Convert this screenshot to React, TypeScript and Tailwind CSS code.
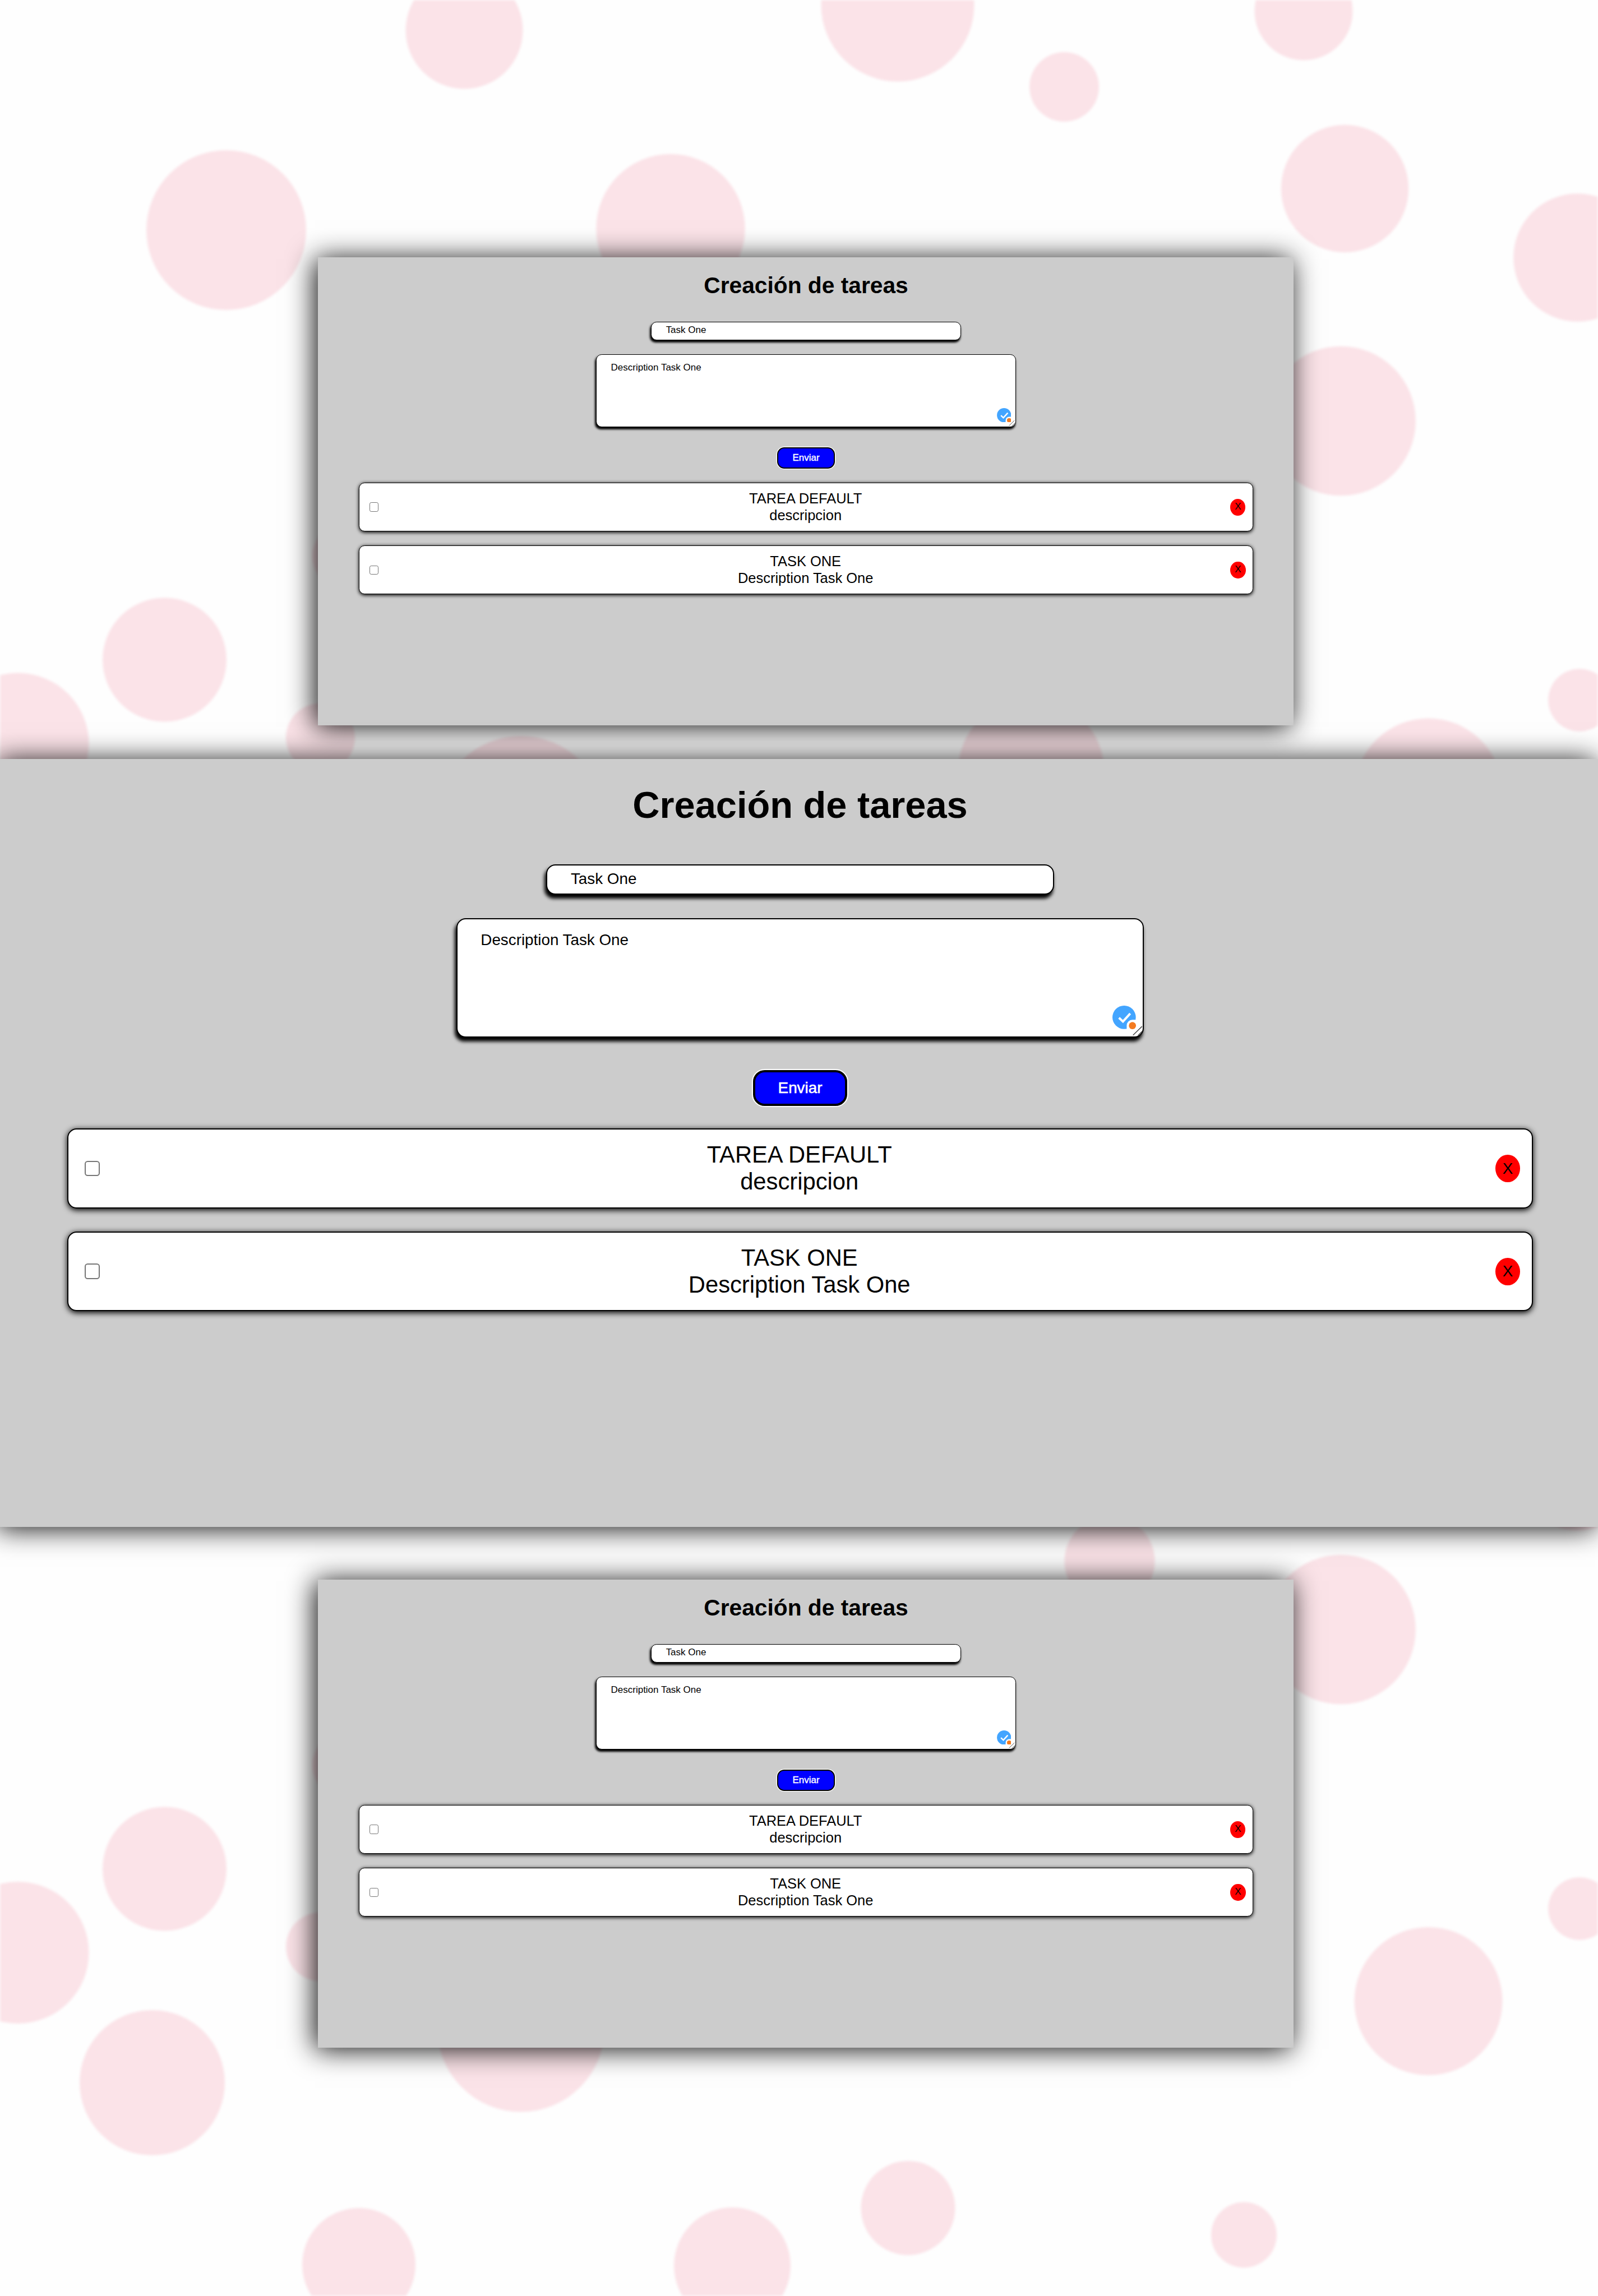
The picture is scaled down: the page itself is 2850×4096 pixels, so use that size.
import React from "react";

const BUBBLES: [number, number, number][] = [
  [828, 54, 104.5],
  [1601, 9, 136.5],
  [1898, 155, 62],
  [2325, 20, 87.5],
  [403.5, 410.5, 142.5],
  [1196, 407.5, 132.7],
  [2398.5, 336.5, 113.7],
  [2813.5, 459.5, 114.3],
  [2391.5, 751, 133.3],
  [293.5, 1177, 110.5],
  [32, 1327, 126.5],
  [571.5, 1316, 61.5],
  [615, 992, 58],
  [929, 1462, 149],
  [1839, 1375, 130],
  [2547.5, 1413.5, 132],
  [2817, 1249, 55.8],
  [1979, 2785, 80.5],
  [2813.5, 2615.7, 114.3],
  [2391.5, 2907, 133.3],
  [293.5, 3334, 110.5],
  [32, 3483.5, 126.5],
  [571.5, 3473, 61.5],
  [615, 3149, 58],
  [929, 3618.5, 149],
  [2547.5, 3570, 132],
  [2817, 3405, 55.8],
  [271.5, 3715.5, 129.5],
  [640, 4040, 101],
  [1306, 4042, 104],
  [1619.5, 3939, 84],
  [2218.5, 3987, 58.5],
];

const TASKS = [
  { title: "TAREA DEFAULT", description: "descripcion" },
  { title: "TASK ONE", description: "Description Task One" },
];

function Background() {
  return (
    <svg className="absolute inset-0 h-[4096px] w-[2850px] blur-[2px]" viewBox="0 0 2850 4096" aria-hidden="true">
      {BUBBLES.map(([cx, cy, r], i) => (
        <circle key={i} cx={cx} cy={cy} r={r} fill="#fbe3e8" />
      ))}
    </svg>
  );
}

function CheckBadge() {
  return (
    <svg className="absolute right-6 bottom-6 h-20 w-20" viewBox="0 0 20 20" fill="none">
      <circle cx="10" cy="10" r="10" fill="#43a5ff" />
      <path d="M5.6 10.4 9 13.6 15.2 6.8" stroke="#fff" strokeWidth="1.9" />
      <path d="M12.2 20.6V17a4.9 4.9 0 0 1 4.9-4.9h3.5v8.5z" fill="#fff" />
      <circle cx="17.1" cy="17.1" r="3.05" fill="#f47b20" />
    </svg>
  );
}

function ResizeGrip() {
  return (
    <svg className="absolute right-0 bottom-0 h-10 w-10" viewBox="0 0 10 10" stroke="#444" strokeWidth="0.7">
      <path d="M1.3 9 9 1.5M5.5 9.3 9.2 5.6" fill="none" />
    </svg>
  );
}

function TaskItem({ title, description }: { title: string; description: string }) {
  return (
    <li className="flex h-68.25 items-center justify-between rounded-[calc(var(--spacing)*8)] border-[length:var(--spacing)] border-black bg-white px-10 shadow-[0_calc(var(--spacing)*1)_calc(var(--spacing)*5)_#000]">
      <input
        type="checkbox"
        className="mr-3 ml-4 h-13 w-13 appearance-none rounded-[calc(var(--spacing)*2.5)] border-[length:var(--spacing)] border-[#767676] bg-white"
      />
      <div className="text-center text-[length:calc(var(--spacing)*20)] leading-[calc(var(--spacing)*23)]">
        <p>{title}</p>
        <p>{description}</p>
      </div>
      <button className="flex h-23.5 w-21.25 items-center justify-center rounded-[50%] bg-[#ff0000] text-[length:calc(var(--spacing)*13.33)] leading-none">
        X
      </button>
    </li>
  );
}

function TaskPanel({ className }: { className: string }) {
  return (
    <section
      className={`relative flex flex-col items-center bg-[#cccccc] pt-21 text-black shadow-[-5px_3px_46px_rgba(0,0,0,0.94)] ${className}`}
    >
      <h1 className="text-[length:calc(var(--spacing)*32)] leading-[calc(var(--spacing)*37)] font-bold">
        Creación de tareas
      </h1>
      <div className="mt-32 flex h-26 w-434 items-center rounded-[calc(var(--spacing)*8)] border-[length:var(--spacing)] border-black bg-white px-20 pb-0.5 text-[length:calc(var(--spacing)*13.33)] leading-none shadow-[calc(var(--spacing)*-1)_calc(var(--spacing)*3)_calc(var(--spacing)*3)_#000]">
        Task One
      </div>
      <div className="relative mt-20 h-102 w-588 rounded-[calc(var(--spacing)*8)] border-[length:var(--spacing)] border-black bg-white px-20 pt-10 text-[length:calc(var(--spacing)*13.33)] leading-[calc(var(--spacing)*15)] shadow-[calc(var(--spacing)*-1)_calc(var(--spacing)*3)_calc(var(--spacing)*3)_#000]">
        Description Task One
        <CheckBadge />
        <ResizeGrip />
      </div>
      <button className="mt-28 flex h-30.5 w-80.5 items-center justify-center rounded-[calc(var(--spacing)*10)] border-[length:calc(var(--spacing)*2)] border-black bg-[#0000ff] text-[length:calc(var(--spacing)*13.33)] leading-none text-white shadow-[0_0_0_var(--spacing)_#fff] [-webkit-text-stroke:calc(var(--spacing)*0.3)_#fff]">
        Enviar
      </button>
      <ul className="mt-19.5 flex w-1253 flex-col gap-19.75">
        {TASKS.map((task) => (
          <TaskItem key={task.title} {...task} />
        ))}
      </ul>
    </section>
  );
}

export default function App() {
  return (
    <main className="relative flex h-[4096px] w-[2850px] flex-col overflow-hidden bg-[#fefefe] pt-[459px] font-['Liberation_Sans',Arial,sans-serif]">
      <Background />
      <TaskPanel className="ml-[567px] h-[835px] w-[1740px] pl-[1px] [--spacing:1.2733px]" />
      <TaskPanel className="mt-[60px] h-[1370px] w-full pl-[4px] [--spacing:2.0864px]" />
      <TaskPanel className="mt-[94px] ml-[567px] h-[835px] w-[1740px] pl-[1px] [--spacing:1.2733px]" />
    </main>
  );
}
